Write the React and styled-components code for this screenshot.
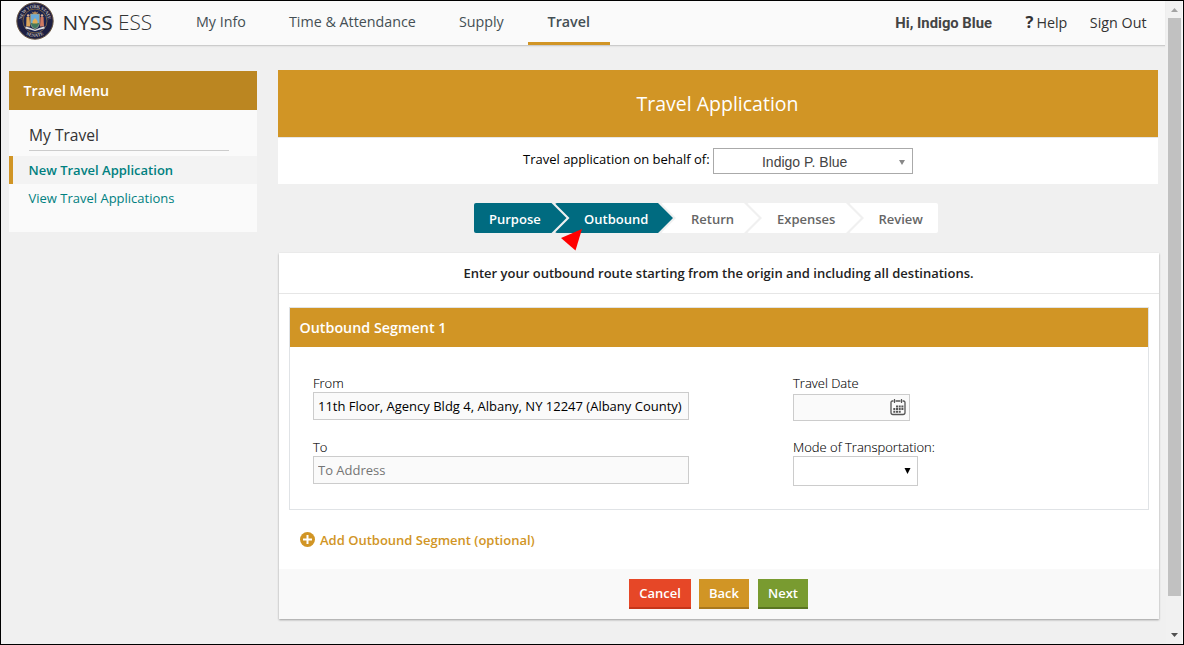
import React from "react";
import styled, { createGlobalStyle } from "styled-components";

const Global = createGlobalStyle`
  *, *::before, *::after { box-sizing: border-box; }
  body {
    margin: 0;
    font-family: "Open Sans", sans-serif;
    font-size: 13px;
    color: #000;
  }
`;

const gold = "#d19525";
const teal = "#006b80";

const Frame = styled.div`
  display: flex;
  width: 1184px;
  height: 645px;
  border: 1px solid #000;
  background: #f0f0f0;
  overflow: hidden;
`;

const Page = styled.div`
  width: 1164px;
  flex: none;
`;

const Header = styled.header`
  display: flex;
  height: 45px;
  padding-left: 15px;
  background: #fafafa;
  border-bottom: 1px solid #ccc;
  box-shadow: 0 1px 1px #e6e6e6;
`;

const Seal = styled.svg`
  width: 38px;
  height: 38px;
  margin-top: 1px;
  flex: none;
`;

const Brand = styled.div`
  width: 125.5px;
  padding-left: 8.5px;
  font-size: 20.8px;
  line-height: 43px;
  color: #333;
  white-space: nowrap;
`;

const Thin = styled.span`
  font-weight: 300;
`;

const Nav = styled.nav`
  display: flex;
  gap: 10px;
`;

const NavItem = styled.a`
  height: 44px;
  padding: 0 16.5px;
  font-size: 14.3px;
  line-height: 41px;
  color: #444f54;
  border-bottom: 3px solid transparent;
  white-space: nowrap;
  ${(p) =>
    p.$active &&
    `
    margin-left: -2.5px;
    padding: 0 19.8px;
    font-weight: 600;
    border-bottom-color: ${gold};
  `}
`;

const UserLinks = styled.div`
  display: flex;
  margin-left: auto;
  padding-right: 18.5px;
  font-size: 14.3px;
  line-height: 43px;
  color: #333;
  white-space: nowrap;
`;

const Greeting = styled.span`
  margin-right: 33.5px;
  font-family: Roboto, sans-serif;
  font-size: 14.8px;
  font-weight: 700;
  line-height: 44px;
  color: #444;
`;

const HelpMark = styled.span`
  margin-right: 3px;
  font-size: 16.5px;
  font-weight: 700;
  line-height: 42px;
`;

const HelpLink = styled.a`
  display: flex;
  margin-right: 22.5px;
`;

const Body = styled.div`
  display: flex;
  align-items: flex-start;
  padding: 24px 6px 0 8px;
`;

const Sidebar = styled.aside`
  width: 248px;
  height: 161px;
  margin: 1px 21px 0 0;
  flex: none;
  background: #fafafa;
`;

const SidebarTitle = styled.h3`
  height: 39px;
  margin: 0;
  padding-left: 14.5px;
  background: #bb8621;
  color: #fff;
  font-size: 14.3px;
  font-weight: 600;
  line-height: 39px;
`;

const SidebarHeading = styled.h4`
  width: 200px;
  height: 31px;
  margin: 10px 0 5px 20px;
  border-bottom: 1px solid #ccc;
  color: #333;
  font-size: 15.6px;
  font-weight: 400;
  line-height: 31px;
`;

const SidebarLink = styled.a`
  display: block;
  height: 28px;
  padding-left: 15.5px;
  border-left: 4px solid ${(p) => (p.$active ? gold : "transparent")};
  background: ${(p) => (p.$active ? "#f3f3f3" : "transparent")};
  color: #008080;
  font-weight: ${(p) => (p.$active ? 600 : 400)};
  line-height: 28px;
`;

const Main = styled.main`
  width: 881px;
`;

const Title = styled.h1`
  width: 880px;
  height: 67px;
  margin: 0;
  padding-right: 1px;
  background: ${gold};
  color: #fff;
  font-size: 19.5px;
  font-weight: 400;
  line-height: 67px;
  text-align: center;
`;

const Behalf = styled.div`
  display: flex;
  width: 880px;
  height: 47px;
  padding: 11px 0 0 245px;
  background: #fff;
  border-top: 1px solid #e6e6e6;
  line-height: 21px;
  white-space: nowrap;
`;

const PersonSelect = styled.div`
  display: flex;
  align-items: center;
  width: 200px;
  height: 26px;
  margin: -1px 0 0 3px;
  padding: 2px 7px 0 0;
  border: 1px solid #aaa;
  color: #444;
  font-family: "Liberation Sans", sans-serif;
  font-size: 14px;
`;

const Person = styled.span`
  flex: 1;
  padding-right: 3px;
  text-align: center;
`;

const Caret = styled.svg`
  width: ${(p) => p.$size}px;
  height: ${(p) => p.$size - 1}px;
  margin-top: ${(p) => p.$drop || 0}px;
  flex: none;
  fill: ${(p) => p.$color};
`;

const Steps = styled.ol`
  position: relative;
  display: flex;
  width: 464px;
  height: 30px;
  margin: 19px 0 0 196px;
  padding: 0;
  list-style: none;
`;

const notched =
  "polygon(0 0, calc(100% - 15px) 0, 100% 50%, calc(100% - 15px) 100%, 0 100%, 15px 50%)";
const firstShape =
  "polygon(0 0, calc(100% - 15px) 0, 100% 50%, calc(100% - 15px) 100%, 0 100%)";
const lastShape = "polygon(0 0, 100% 0, 100% 100%, 0 100%, 15px 50%)";

const Step = styled.li`
  width: ${(p) => p.$width}px;
  margin-left: ${(p) => (p.$first ? 0 : -12)}px;
  padding-left: ${(p) => p.$inset}px;
  border-radius: 2px;
  background: ${(p) => (p.$done ? teal : "#fff")};
  clip-path: ${(p) => (p.$first ? firstShape : p.$last ? lastShape : notched)};
  color: ${(p) => (p.$done ? "#fff" : "#666")};
  font-weight: 600;
  line-height: 32px;
  flex: none;
`;

const Pointer = styled.svg`
  position: absolute;
  left: 86.5px;
  top: 26px;
  width: 22px;
  height: 22px;
`;

const Card = styled.section`
  width: 880px;
  height: 366px;
  margin: 20px 0 0 1px;
  background: #fff;
  box-shadow: 0 1px 2px rgba(0, 0, 0, 0.35);
`;

const Instruction = styled.p`
  height: 41px;
  margin: 0 0 13px;
  padding-right: 1px;
  border-bottom: 1px solid #e6e6e6;
  color: #222;
  font-weight: 600;
  line-height: 40px;
  text-align: center;
`;

const Segment = styled.div`
  width: 860px;
  height: 203px;
  margin-left: 10px;
  border: 1px solid #e0e3e6;
`;

const SegmentTitle = styled.h2`
  height: 39px;
  margin: 0;
  padding-left: 9.5px;
  background: ${gold};
  color: #fff;
  font-size: 14.3px;
  font-weight: 600;
  line-height: 39px;
`;

const Fields = styled.div`
  display: grid;
  grid-template-columns: 480px 200px;
  grid-template-rows: 64px 64px;
  padding: 28px 0 0 23px;
`;

const Label = styled.label`
  display: block;
  height: ${(p) => p.$height || 17}px;
  color: #000;
  font-weight: 300;
  line-height: 16px;
  -webkit-text-stroke: 0.1px #000;
`;

const AddressInput = styled.input`
  display: block;
  width: 376px;
  height: 28px;
  padding: 0 4px;
  border: 1px solid #ccc;
  background: #fafafa;
  color: #000;
  font: 400 13px "Open Sans", sans-serif;
  &::placeholder { color: #757575; }
`;

const PickerBox = styled.div`
  display: flex;
  align-items: center;
  justify-content: flex-end;
  width: ${(p) => p.$width}px;
  height: ${(p) => p.$height}px;
  padding: 0 ${(p) => p.$right}px ${(p) => p.$bottom || 0}px 0;
  border: 1px solid #ccc;
  background: ${(p) => p.$fill};
`;

const AddSegment = styled.a`
  display: flex;
  align-items: center;
  height: 59px;
  padding-left: 21px;
  color: ${gold};
  font-weight: 600;
`;

const PlusIcon = styled.svg`
  width: 15px;
  height: 15px;
  margin: 0 5px 0 0;
`;

const Footer = styled.footer`
  display: flex;
  gap: 8px;
  height: 50px;
  padding: 10px 0 0 350px;
  background: #f9f9f9;
`;

const Button = styled.button`
  width: ${(p) => p.$width}px;
  height: 30px;
  margin: 0 0 0 ${(p) => p.$shift || 0}px;
  padding: 0;
  border: 0;
  border-bottom: 2px solid ${(p) => p.$edge};
  background: ${(p) => p.$fill};
  color: #fff;
  font: 600 13px "Open Sans", sans-serif;
`;

const ScrollBar = styled.div`
  display: flex;
  flex-direction: column;
  align-items: center;
  width: 17px;
  margin-left: auto;
  border-right: 1px solid #fafafa;
  background: #f1f1f1;
`;

const Arrow = styled.svg`
  width: 7px;
  height: 4px;
  margin: ${(p) => p.$margin};
  fill: ${(p) => p.$color};
  flex: none;
`;

const Thumb = styled.div`
  width: 13px;
  height: 578px;
  margin-left: 1px;
  background: #c1c1c1;
  flex: none;
`;

function StateSeal() {
  return (
    <Seal viewBox="0 0 38 38">
      <defs>
        <path id="sealTop" d="M6 19a13 13 0 0 1 26 0" />
        <path id="sealBottom" d="M3 19a16 16 0 0 0 32 0" />
      </defs>
      <circle cx="19" cy="19" r="18.2" fill="#1d1f42" stroke="#6d5a45" strokeWidth="1" />
      <circle cx="19" cy="19" r="12" fill="#1a2350" stroke="#8a7044" strokeWidth=".8" />
      <g fill="#b5b0ad" fontFamily="Liberation Serif, serif" fontWeight="700" fontSize="4.8">
        <text textAnchor="middle">
          <textPath href="#sealTop" startOffset="50%" textLength="38">NEW YORK STATE</textPath>
        </text>
        <text textAnchor="middle">
          <textPath href="#sealBottom" startOffset="50%">SENATE</textPath>
        </text>
      </g>
      <path d="M14.500 12h9v8c0 4-2 6-4.500 7-2.500-1-4.500-3-4.500-7z" fill="#6aaad8" stroke="#c5a35c" strokeWidth=".6" />
      <path d="M15 21h8c0 3-2 4.500-4 5.500-2-1-4-2.500-4-5.500z" fill="#45795d" />
      <path d="M16.500 19l2.500-3 2.500 3v2.500h-5z" fill="#e3ad55" />
      <path d="M15.500 9.500l2.500 1 1-1.500 1 1.500 2.500-1-2 2.500h-3z" fill="#b88a55" />
      <path d="M10.500 15h3l.7 9.500h-4z" fill="#dba45c" />
      <path d="M24.500 15h3l.500 9.500h-4z" fill="#d07a62" />
      <circle cx="12.200" cy="13.500" r="1.300" fill="#ddb193" />
      <circle cx="26" cy="13.500" r="1.300" fill="#ddb193" />
      <path d="M9.500 24.500q4.500 1 9.500 3.200 5-2.200 9.500-3.200v2q-4 .8-9.500 2.500-5.500-1.700-9.500-2.500z" fill="#dedee2" />
    </Seal>
  );
}

function CalendarIcon() {
  return (
    <svg width="16" height="18" viewBox="0 0 16 18">
      <path d="M3.500 3h-1Q1 3 1 4.500v10Q1 16.500 3 16.500h10q2 0 2-2v-10Q15 3 13.500 3h-1M5.500 3h5" fill="none" stroke="#555" strokeWidth="1.300" />
      <path d="M4.500 1v4M11.500 1v4" stroke="#555" strokeWidth="1.200" />
      <path d="M6 7.500h2v2H6zM8.700 7.500h2v2h-2zM11.400 7.500h2v2h-2zM3.300 10.100h2v2h-2zM6 10.100h2v2H6zM8.700 10.100h2v2h-2zM11.400 10.100h2v2h-2zM3.300 12.700h2v2h-2zM6 12.700h2v2H6zM8.700 12.700h2v2h-2z" fill="#555" />
    </svg>
  );
}

export default function App() {
  return (
    <Frame>
      <Global />
      <Page>
        <Header>
          <StateSeal />
          <Brand>NYSS <Thin>ESS</Thin></Brand>
          <Nav>
            <NavItem>My Info</NavItem>
            <NavItem>Time &amp; Attendance</NavItem>
            <NavItem>Supply</NavItem>
            <NavItem $active>Travel</NavItem>
          </Nav>
          <UserLinks>
            <Greeting>Hi, Indigo Blue</Greeting>
            <HelpLink><HelpMark>?</HelpMark>Help</HelpLink>
            <a>Sign Out</a>
          </UserLinks>
        </Header>
        <Body>
          <Sidebar>
            <SidebarTitle>Travel Menu</SidebarTitle>
            <SidebarHeading>My Travel</SidebarHeading>
            <SidebarLink $active>New Travel Application</SidebarLink>
            <SidebarLink>View Travel Applications</SidebarLink>
          </Sidebar>
          <Main>
            <Title>Travel Application</Title>
            <Behalf>
              Travel application on behalf of:
              <PersonSelect>
                <Person>Indigo P. Blue</Person>
                <Caret $size={6} $drop={1} $color="#888" viewBox="0 0 6 5"><path d="M0 0h6L3 5z" /></Caret>
              </PersonSelect>
            </Behalf>
            <Steps>
              <Step $first $done $width={92.5} $inset={15}>Purpose</Step>
              <Step $done $width={118.5} $inset={29.5}>Outbound</Step>
              <Step $width={98} $inset={30}>Return</Step>
              <Step $width={114} $inset={30}>Expenses</Step>
              <Step $last $width={89} $inset={29.5}>Review</Step>
              <Pointer viewBox="0 0 22 22"><path d="M21 0L0 9l14.500 12.500z" fill="#f00" /></Pointer>
            </Steps>
            <Card>
              <Instruction>
                Enter your outbound route starting from the origin and including all destinations.
              </Instruction>
              <Segment>
                <SegmentTitle>Outbound Segment 1</SegmentTitle>
                <Fields>
                  <div>
                    <Label>From</Label>
                    <AddressInput defaultValue="11th Floor, Agency Bldg 4, Albany, NY 12247 (Albany County)" />
                  </div>
                  <div>
                    <Label $height={19}>Travel Date</Label>
                    <PickerBox $width={117} $height={27} $right={3} $bottom={2} $fill="#fafafa"><CalendarIcon /></PickerBox>
                  </div>
                  <div>
                    <Label>To</Label>
                    <AddressInput placeholder="To Address" />
                  </div>
                  <div>
                    <Label>Mode of Transportation:</Label>
                    <PickerBox $width={125} $height={30} $right={6} $bottom={1} $fill="#fff">
                      <Caret $size={7} $color="#000" viewBox="0 0 7 6"><path d="M.5 0h6L3.500 6z" /></Caret>
                    </PickerBox>
                  </div>
                </Fields>
              </Segment>
              <AddSegment>
                <PlusIcon viewBox="0 0 15 15">
                  <circle cx="7.500" cy="7.500" r="7.500" fill={gold} />
                  <path d="M7.500 3v9M3 7.500h9" stroke="#fff" strokeWidth="2" />
                </PlusIcon>
                Add Outbound Segment (optional)
              </AddSegment>
              <Footer>
                <Button $width={62} $fill="#e64727" $edge="#c5361a">Cancel</Button>
                <Button $width={50} $fill={gold} $edge="#a9781d">Back</Button>
                <Button $width={50} $shift={1} $fill="#799b30" $edge="#5a7522">Next</Button>
              </Footer>
            </Card>
          </Main>
        </Body>
      </Page>
      <ScrollBar>
        <Arrow $margin="7px 0 6px 1px" $color="#a3a3a3" viewBox="0 0 7 4"><path d="M3.500 0L7 4H0z" /></Arrow>
        <Thumb />
        <Arrow $margin="37px 0 0 1px" $color="#505050" viewBox="0 0 7 4"><path d="M0 0h7L3.500 4z" /></Arrow>
      </ScrollBar>
    </Frame>
  );
}
